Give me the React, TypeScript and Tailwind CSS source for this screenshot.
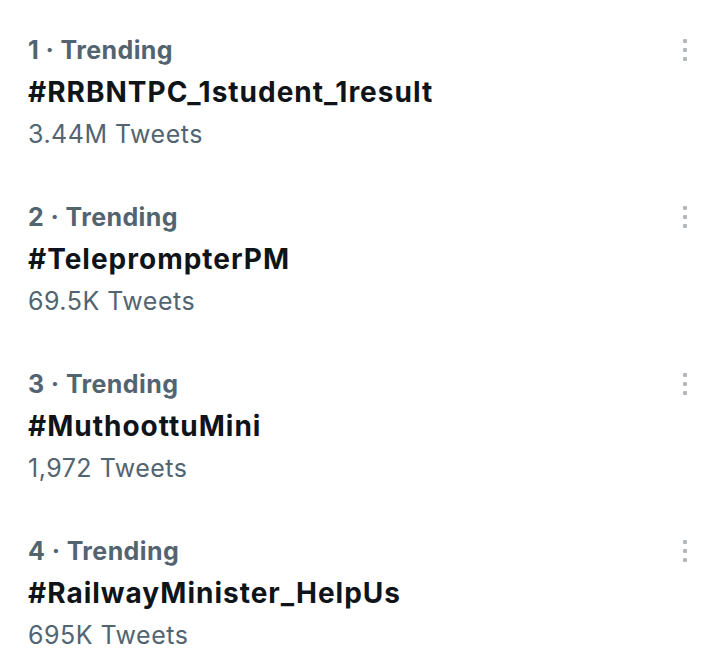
import React from "react";

const items = [
  { n: 1, tag: "#RRBNTPC_1student_1result", count: "3.44M Tweets" },
  { n: 2, tag: "#TeleprompterPM", count: "69.5K Tweets" },
  { n: 3, tag: "#MuthoottuMini", count: "1,972 Tweets" },
  { n: 4, tag: "#RailwayMinister_HelpUs", count: "695K Tweets" },
];

function Dots() {
  return (
    <div className="flex flex-col items-center gap-[5px] pt-[10px]">
      <div className="h-[4px] w-[4px] rounded-[1px] bg-[#b4b8bc]" />
      <div className="h-[4px] w-[4px] rounded-[1px] bg-[#b4b8bc]" />
      <div className="h-[4px] w-[4px] rounded-[1px] bg-[#b4b8bc]" />
    </div>
  );
}

export default function App() {
  return (
    <div
      className="min-h-[667px] w-[720px] bg-white pt-[29px]"
      style={{ fontFamily: "Inter, Roboto, sans-serif" }}
    >
      {items.map((it) => (
        <div key={it.n} className="flex justify-between pb-[41px] pl-[28px] pr-[33px]">
          <div className="flex flex-col">
            <div className="text-[25px] font-bold leading-[42px] tracking-[0.4px] text-[#536471]">
              {it.n} · Trending
            </div>
            <div className="text-[28px] font-bold leading-[42px] tracking-[1px] text-[#0f1419]">
              {it.tag}
            </div>
            <div className="text-[25px] leading-[42px] tracking-[0.5px] text-[#536471]">
              {it.count}
            </div>
          </div>
          <Dots />
        </div>
      ))}
    </div>
  );
}
